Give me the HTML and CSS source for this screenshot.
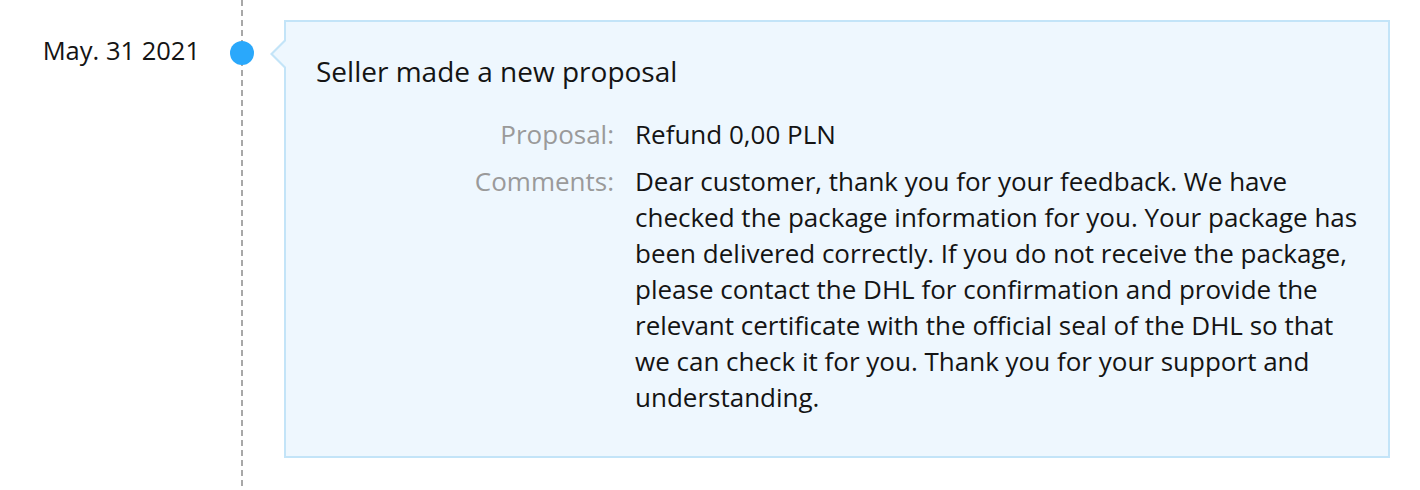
FILE: index.html
```html
<!DOCTYPE html>
<html>
<head>
<meta charset="utf-8">
<link rel="stylesheet" href="styles.css">
</head>
<body>
<div class="timeline">
  <div class="date-col">
    <div class="date">May. 31 2021</div>
  </div>
  <div class="axis">
    <span class="dot"></span>
  </div>
  <div class="entry">
    <div class="card">
      <div class="title">Seller made a new proposal</div>
      <div class="fields">
        <div class="label">Proposal:</div>
        <div class="value">Refund 0,00 PLN</div>
        <div class="label">Comments:</div>
        <div class="value">Dear customer, thank you for your feedback. We have checked the package information for you. Your package has been delivered correctly. If you do not receive the package, please contact the DHL for confirmation and provide the relevant certificate with the official seal of the DHL so that we can check it for you. Thank you for your support and understanding.</div>
      </div>
    </div>
  </div>
</div>
</body>
</html>
```
FILE: styles.css
```css
* { box-sizing: border-box; }
html, body { margin: 0; padding: 0; background: #fff; }
body {
  font-family: "Open Sans", "Noto Sans", sans-serif;
  color: #141414;
  width: 1420px;
  height: 490px;
  overflow: hidden;
}
.timeline {
  display: flex;
  height: 490px;
}
.date-col {
  width: 200px;
  padding-top: 32px;
  text-align: right;
}
.date {
  font-size: 25.5px;
  line-height: 36px;
  color: #141414;
}
.axis {
  width: 84px;
  position: relative;
  background-image: linear-gradient(to bottom, #a8a8a8 0, #a8a8a8 6px, transparent 6px, transparent 10px);
  background-size: 2px 10px;
  background-repeat: repeat-y;
  background-position: 41px 0;
}
.dot {
  position: absolute;
  left: 30px;
  top: 41px;
  width: 24px;
  height: 24px;
  border-radius: 50%;
  background: #2aa8fb;
}
.entry {
  padding-top: 20px;
}
.card {
  position: relative;
  width: 1106px;
  background: #eef7fe;
  border: 2px solid #c3e4f8;
  padding: 31px 30px 41px 30px;
}
.card::before {
  content: "";
  position: absolute;
  left: -16px;
  top: 16px;
  border-style: solid;
  border-width: 16px 16px 16px 0;
  border-color: transparent #c3e4f8 transparent transparent;
}
.card::after {
  content: "";
  position: absolute;
  left: -13px;
  top: 16px;
  border-style: solid;
  border-width: 16px 16px 16px 0;
  border-color: transparent #eef7fe transparent transparent;
}
.title {
  font-size: 28px;
  line-height: 36px;
  color: #141414;
  margin-bottom: 27px;
}
.fields {
  display: grid;
  grid-template-columns: 298px 1fr;
  column-gap: 21px;
  row-gap: 11px;
  font-size: 26px;
  line-height: 36px;
}
.label {
  text-align: right;
  color: #9a9a9a;
}
.value {
  color: #141414;
}
```
